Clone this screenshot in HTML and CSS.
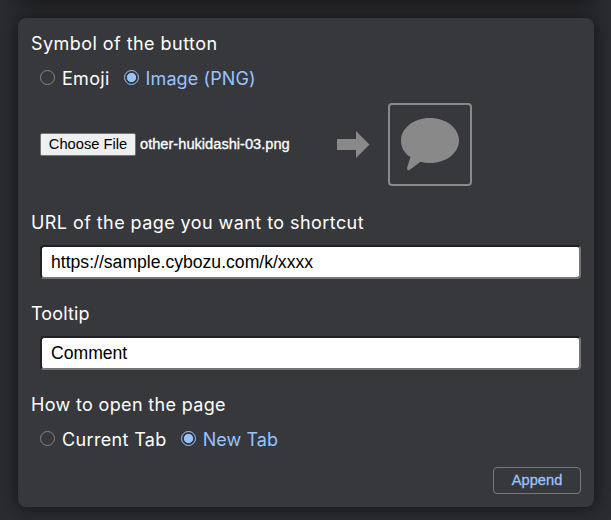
FILE: index.html
```html
<!DOCTYPE html>
<html lang="en">
<head>
<meta charset="utf-8">
<title>Shortcut button</title>
<link rel="stylesheet" href="styles.css">
</head>
<body>
<div class="previous-panel"></div>
<form class="panel">
  <section class="group symbol">
    <h2><span class="t-symbol">Symbol of the button</span></h2>
    <div class="radios">
      <label class="option"><i class="radio"></i><span class="t-emoji">Emoji</span></label>
      <label class="option selected"><i class="radio"></i><span class="t-image">Image (PNG)</span></label>
    </div>
    <div class="file-row">
      <button type="button" class="choose">Choose File</button>
      <span class="filename">other-hukidashi-03.png</span>
      <svg class="arrow" width="33" height="27" viewBox="0 0 33 27"><path d="M0 8H19V0L32.500 13.500L19 27V19H0Z" fill="#898989"/></svg>
      <div class="preview">
        <svg width="60" height="54" viewBox="0 0 60 54"><path d="M30 0C46 0 59 10 59 22.500S46 45 30 45Q25 45 20.500 43.700L9.500 52Q7 53 7 50L10.500 39C4 35 1 29.500 1 22.500C1 10 14 0 30 0Z" fill="#898989"/></svg>
      </div>
    </div>
  </section>
  <section class="group">
    <h2><span class="t-url">URL of the page you want to shortcut</span></h2>
    <input class="field" type="text" value="https://sample.cybozu.com/k/xxxx">
  </section>
  <section class="group">
    <h2><span class="t-tooltip">Tooltip</span></h2>
    <input class="field" type="text" value="Comment">
  </section>
  <section class="group opening">
    <h2><span class="t-open">How to open the page</span></h2>
    <div class="radios">
      <label class="option"><i class="radio"></i><span class="t-current">Current Tab</span></label>
      <label class="option selected"><i class="radio"></i><span class="t-new">New Tab</span></label>
    </div>
  </section>
  <div class="actions"><button type="button" class="append">Append</button></div>
</form>
</body>
</html>
```
FILE: styles.css
```css
* { box-sizing: border-box; }
body {
  margin: 0;
  height: 520px;
  overflow: hidden;
  padding: 0 17px 0 18px;
  background: #2b2c30;
  color: #fff;
  font-family: Inter, "Liberation Sans", sans-serif;
  font-size: 18px;
}
.previous-panel { height: 18px; margin-top: -18px; box-shadow: 0 0 18px #111; }
.panel {
  position: relative;
  margin-top: 18px;
  height: 489px;
  padding: 13px;
  border-radius: 8px;
  background: #37383b;
  box-shadow: 0 0 18px #111;
}
h2 { margin: 0; height: 26px; font-size: 18px; font-weight: 400; line-height: 28px; white-space: nowrap; }
.symbol h2 { line-height: 26px; }
.t-symbol { letter-spacing: .45px; }
.t-url { letter-spacing: .43px; }
.t-tooltip { letter-spacing: .15px; }
.t-open { letter-spacing: .34px; }
.t-emoji { letter-spacing: .3px; }
.t-image { letter-spacing: .1px; }
.t-current { letter-spacing: .35px; }
.t-new { letter-spacing: .05px; }
.group { margin-bottom: 21px; }
.symbol { margin-bottom: 23px; }
.radios { display: flex; gap: 14px; height: 26px; margin: 9px 0 0 9px; }
.option { display: flex; align-items: center; gap: 7px; line-height: 28px; white-space: nowrap; }
.radio { display: block; width: 15px; height: 15px; border: 1px solid #85868a; border-radius: 50%; margin-bottom: 4px; }
.selected { color: #99c3ff; }
.selected .radio { border-color: #99c3ff; background: radial-gradient(circle, #99c3ff 4.200px, transparent 5px); }
.file-row { display: flex; align-items: center; height: 83px; margin: 11px 0 0 9px; }
.choose {
  width: 96px; height: 23px; padding: 0 0 2px; border: 1px solid #767676; border-radius: 2px;
  background: #efefef; color: #000; font: 14.700px "Liberation Sans", sans-serif;
}
.filename { width: 150px; margin: 0 0 2px 4px; font: 14.650px "Liberation Sans", sans-serif; white-space: nowrap; -webkit-text-stroke: .3px; }
.arrow { margin-left: 47px; }
.preview { display: grid; place-items: center; width: 84px; height: 83px; margin-left: 18px; border: 2px solid #898989; border-radius: 4px; }
.field {
  display: block; width: 541px; height: 34px; margin: 10px 0 0 9px; padding: 0 9px;
  border: 2px solid; border-color: #202124 #767676 #767676 #202124; border-radius: 4px;
  background: #fff; color: #000; font: 17.600px "Liberation Sans", sans-serif;
}
.opening { margin-bottom: 14px; }
.opening .radios { margin-top: 10px; }
.actions { display: flex; justify-content: flex-end; }
.append {
  width: 88px; height: 27px; padding: 0 0 2px; border: 1px solid #77787b; border-radius: 4px;
  background: transparent; color: #99c3ff; font: 14.700px "Liberation Sans", sans-serif; -webkit-text-stroke: .3px;
}
```
